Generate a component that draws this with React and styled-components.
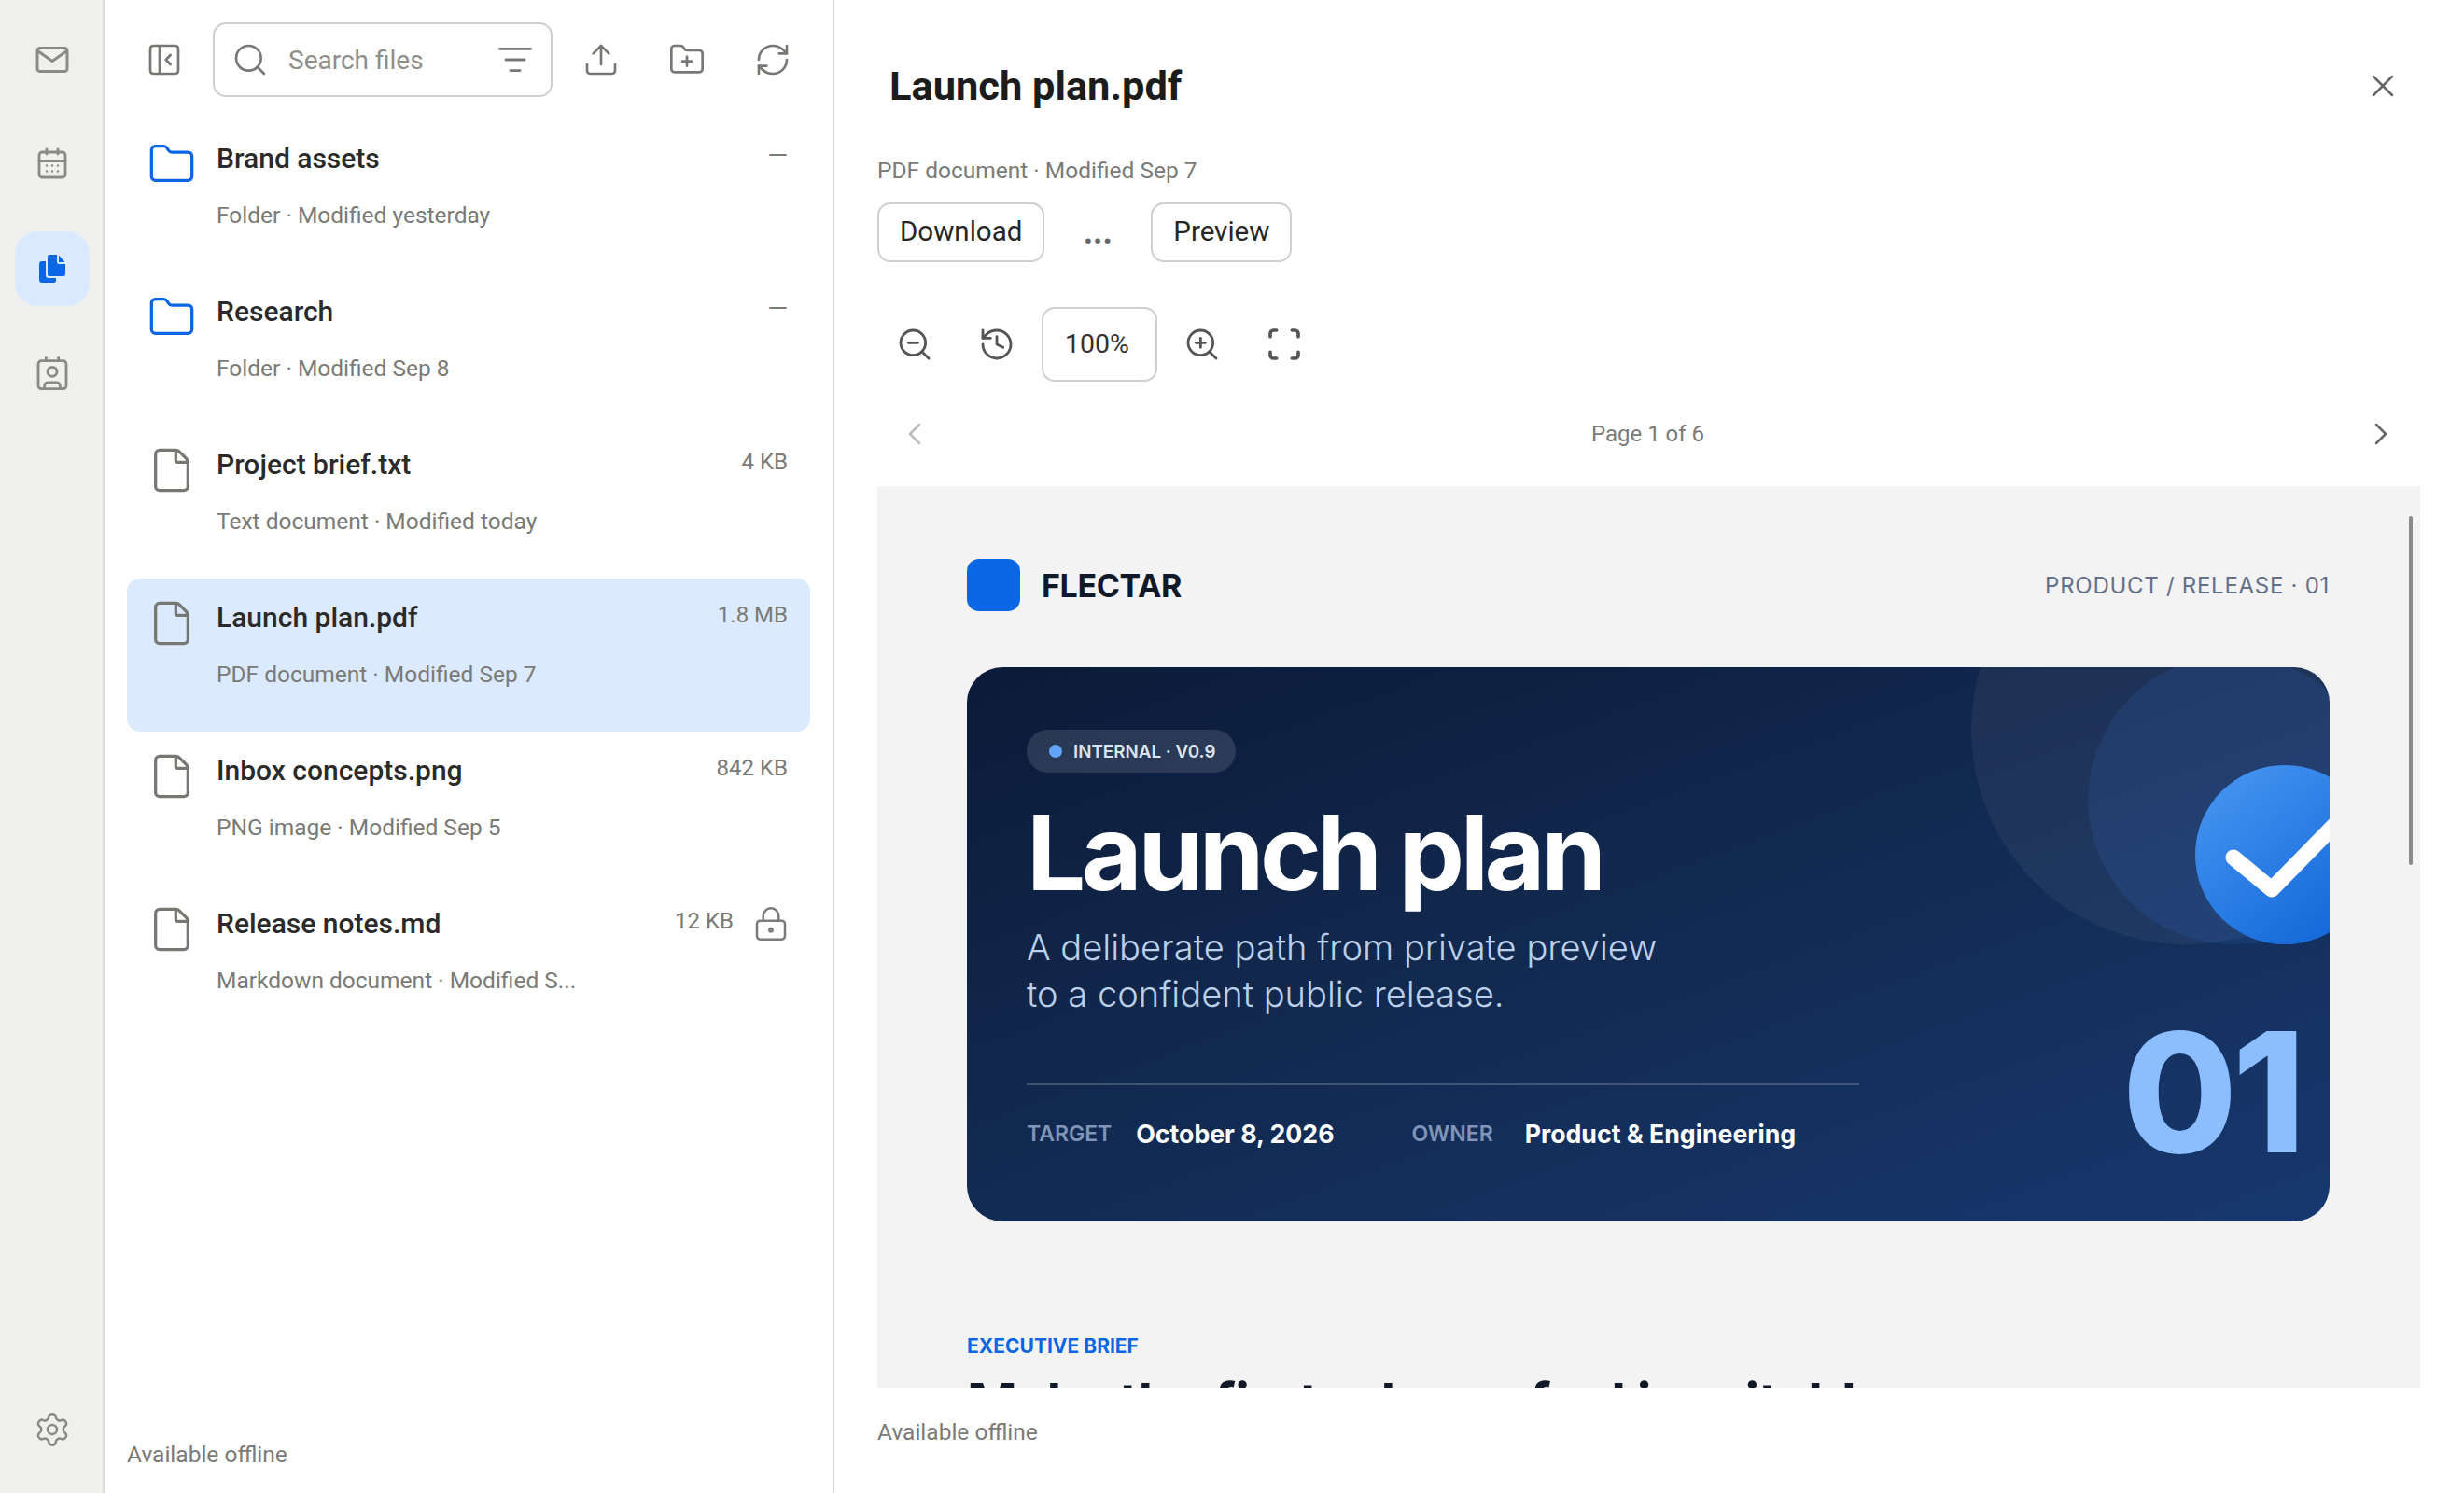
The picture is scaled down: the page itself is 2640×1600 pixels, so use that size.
import React from "react";
import styled, { createGlobalStyle } from "styled-components";
import {
  Contact,
  Settings,
  PanelLeftClose,
  Search,
  ListFilter,
  Upload,
  FolderPlus,
  RefreshCw,
  Folder,
  File,
  LockKeyhole,
  X,
  ZoomOut,
  ZoomIn,
  History,
  Scan,
  ChevronLeft,
  ChevronRight,
} from "lucide-react";

const GlobalStyle = createGlobalStyle`
  html, body { margin: 0; padding: 0; background: #fff; }
  body { font-family: "Roboto", "Liberation Sans", sans-serif; }
`;

const Shell = styled.div`
  display: grid;
  grid-template-columns: 112px 782px 1fr;
  grid-template-rows: minmax(0, 1fr);
  width: 2640px;
  height: 1600px;
  overflow: hidden;
  color: #222;
`;

const Rail = styled.nav`
  display: flex;
  flex-direction: column;
  align-items: center;
  gap: 32px;
  padding: 24px 0 28px 2px;
  box-sizing: border-box;
  background: #f0f0ef;
  border-right: 2px solid #dcdcda;
`;

const RailItem = styled.div`
  display: flex;
  align-items: center;
  justify-content: center;
  width: 80px;
  height: 80px;
  flex: none;
  border-radius: 24px;
  color: #8a8a87;
  background: ${(p) => (p.$active ? "#dbeafe" : "transparent")};
  margin-top: ${(p) => (p.$bottom ? "auto" : "0")};
`;

const ListPanel = styled.section`
  display: flex;
  flex-direction: column;
  padding: 24px 24px 24px;
  box-sizing: border-box;
  border-right: 2px solid #dcdcda;
`;

const ListHeader = styled.div`
  display: flex;
  gap: 12px;
  margin-bottom: 24px;
`;

const IconButton = styled.div`
  display: flex;
  align-items: center;
  justify-content: center;
  width: 80px;
  height: 80px;
  flex: none;
  color: ${(p) => p.$color || "#777773"};
`;

const SearchBox = styled.div`
  display: flex;
  align-items: center;
  flex: 1;
  height: 80px;
  box-sizing: border-box;
  padding: 0 18px;
  gap: 21px;
  border: 2px solid #cfcfcd;
  border-radius: 14px;
  color: #777773;
`;

const SearchText = styled.span`
  flex: 1;
  font-size: 28px;
  color: #8e8e8b;
`;

const FileList = styled.div`
  display: flex;
  flex-direction: column;
  flex: 1;
`;

const Row = styled.div`
  display: grid;
  grid-template-columns: 52px 1fr auto;
  column-gap: 22px;
  height: 164px;
  box-sizing: border-box;
  padding: 22px 24px 0 22px;
  border-radius: 14px;
  background: ${(p) => (p.$selected ? "#dbeafe" : "transparent")};
`;

const RowIcon = styled.div`
  color: ${(p) => (p.$folder ? "#0b66e4" : "#777773")};
  height: 52px;
`;

const RowText = styled.div`
  display: flex;
  flex-direction: column;
  min-width: 0;
`;

const RowTitle = styled.div`
  font-size: 30px;
  line-height: 40px;
  font-weight: 500;
  color: #2a2a2a;
`;

const RowSub = styled.div`
  margin-top: 21px;
  font-size: 24.5px;
  line-height: 40px;
  color: #7a7a77;
  white-space: nowrap;
`;

const RowMeta = styled.div`
  display: flex;
  align-items: flex-start;
  gap: 20px;
  font-size: ${(p) => (p.$dash ? "28px" : "24px")};
  line-height: 34px;
  color: #7a7a77;
`;

const LockSlot = styled.span`
  margin-right: -2px;
`;

const Offline = styled.div`
  font-size: 24.5px;
  line-height: 34px;
  color: #7a7a77;
`;

const Preview = styled.main`
  display: flex;
  flex-direction: column;
  min-width: 0;
  min-height: 0;
  padding: 0 47px 0 46px;
`;

const TitleRow = styled.div`
  display: flex;
  align-items: center;
  justify-content: space-between;
  height: 104px;
  margin-top: 40px;
`;

const Title = styled.h1`
  margin: 0 0 0 13px;
  font-size: 43.4px;
  font-weight: 700;
  color: #1c1c1c;
`;

const Meta = styled.div`
  margin-top: 22px;
  font-size: 24.5px;
  line-height: 34px;
  color: #7a7a77;
`;

const Actions = styled.div`
  display: flex;
  gap: 12px;
  margin-top: 17px;
`;

const ActionButton = styled.div`
  display: flex;
  align-items: center;
  height: 64px;
  box-sizing: border-box;
  padding: 0 22px 2px;
  border: 2px solid #cfcfcd;
  border-radius: 14px;
  font-size: 29.5px;
  color: #262626;
`;

const More = styled.div`
  width: 90px;
  text-align: center;
  font-size: 36px;
  font-weight: 700;
  line-height: 64px;
  color: #666;
`;

const ZoomRow = styled.div`
  display: flex;
  gap: 8px;
  margin-top: 48px;
`;

const ZoomValue = styled.div`
  display: flex;
  align-items: center;
  justify-content: center;
  width: 124px;
  height: 80px;
  box-sizing: border-box;
  padding: 0 5px 2px 0;
  border: 2px solid #cfcfcd;
  border-radius: 14px;
  font-size: 28.5px;
  color: #333;
`;

const Pager = styled.div`
  display: flex;
  align-items: center;
  justify-content: space-between;
  height: 112px;
  padding: 0 22px 0 20px;
  font-size: 24px;
  color: #7a7a77;
`;

const Frame = styled.div`
  position: relative;
  flex: 1;
  min-height: 0;
  overflow: hidden;
  background: #f3f3f3;
`;

const Scrollbar = styled.div`
  position: absolute;
  top: 32px;
  right: 8px;
  width: 4px;
  height: 374px;
  border-radius: 2px;
  background: #8a8a8a;
`;

const Doc = styled.div`
  padding: 78px 97px 0 96px;
  font-family: "Inter", "Liberation Sans", sans-serif;
`;

const DocHeader = styled.div`
  display: flex;
  align-items: center;
  gap: 23px;
  height: 56px;
`;

const LogoMark = styled.div`
  width: 57px;
  height: 56px;
  border-radius: 13px;
  background: #0b66e4;
`;

const Brand = styled.div`
  flex: 1;
  font-size: 34px;
  font-weight: 700;
  letter-spacing: -0.01em;
  color: #111827;
`;

const Crumb = styled.div`
  font-size: 24px;
  letter-spacing: 0.03em;
  color: #64708a;
`;

const Hero = styled.div`
  position: relative;
  height: 594px;
  margin-top: 60px;
  box-sizing: border-box;
  padding: 67px 64px 0;
  overflow: hidden;
  border-radius: 38px;
  background: linear-gradient(160deg, #0b1a38 0%, #12294f 45%, #17386f 100%);
`;

const HeroArt = styled.svg`
  position: absolute;
  top: 0;
  left: 0;
`;

const HeroBody = styled.div`
  position: relative;
`;

const Chip = styled.div`
  display: inline-flex;
  align-items: center;
  gap: 12px;
  height: 46px;
  padding: 0 22px 0 24px;
  box-sizing: border-box;
  border-radius: 23px;
  background: rgba(255, 255, 255, 0.12);
  font-size: 18.8px;
  font-weight: 600;
  color: #dbe4f0;
`;

const ChipDot = styled.span`
  width: 14px;
  height: 14px;
  border-radius: 50%;
  background: #60a5fa;
`;

const HeroTitle = styled.div`
  margin-top: 23px;
  font-size: 112px;
  line-height: 124px;
  font-weight: 700;
  letter-spacing: -0.04em;
  color: #fff;
`;

const HeroSub = styled.div`
  margin-top: 15px;
  font-size: 38.1px;
  line-height: 50px;
  font-weight: 300;
  color: #bcd0ea;
`;

const Divider = styled.div`
  width: 892px;
  height: 2px;
  margin-top: 71px;
  background: rgba(255, 255, 255, 0.2);
`;

const HeroMeta = styled.div`
  display: flex;
  align-items: center;
  height: 40px;
  margin-top: 32px;
`;

const MetaLabel = styled.span`
  font-size: 23px;
  font-weight: 600;
  color: #8095b8;
  margin-right: ${(p) => p.$gap}px;
`;

const MetaValue = styled.span`
  font-size: 26.7px;
  font-weight: 700;
  color: #fff;
  margin-right: ${(p) => p.$gap || 0}px;
`;

const BigNumber = styled.div`
  position: absolute;
  right: 31px;
  bottom: 63px;
  font-size: 178px;
  line-height: 150px;
  font-weight: 800;
  letter-spacing: -0.03em;
  color: #8cbdff;
`;

const Eyebrow = styled.div`
  margin-top: 118px;
  font-size: 21px;
  line-height: 32px;
  font-weight: 700;
  color: #0b66e4;
`;

const Heading = styled.div`
  margin-top: 8px;
  font-size: 58px;
  line-height: 72px;
  font-weight: 700;
  letter-spacing: -0.018em;
  color: #111827;
  white-space: nowrap;
`;

const PreviewFoot = styled.div`
  height: 112px;
  flex: none;
  box-sizing: border-box;
  padding-top: 30px;
  font-size: 24.5px;
  line-height: 34px;
  color: #7a7a77;
`;

const MailIcon = () => (
  <svg width="40" height="40" viewBox="0 0 40 40" fill="none" stroke="currentColor" strokeWidth="3" strokeLinecap="round" strokeLinejoin="round">
    <rect x="4" y="7.5" width="32" height="25" rx="3" />
    <path d="M5 11l15 10.500L35 11" />
  </svg>
);

const CalendarIcon = () => (
  <svg width="40" height="40" viewBox="0 0 40 40" fill="none" stroke="currentColor" strokeWidth="2.800" strokeLinecap="round" strokeLinejoin="round">
    <path d="M14 4v5M26 4v5" />
    <rect x="6" y="7" width="28" height="27" rx="3" />
    <path d="M6 16.500h28" />
    <path d="M14 21.500h.01M20 21.500h.01M26 21.500h.01M14 27.500h.01M20 27.500h.01M26 27.500h.01" strokeWidth="2.400" />
  </svg>
);

const FilesIcon = () => (
  <svg width="40" height="40" viewBox="0 0 40 40" fill="#0b66e4">
    <path d="M17 5h8v8a2 2 0 0 0 2 2h7v11a2 2 0 0 1-2 2H17a2 2 0 0 1-2-2V7a2 2 0 0 1 2-2Z" />
    <path d="M27 5.500L33.500 13H27Z" />
    <path d="M13 12v15a3 3 0 0 0 3 3h8v2.500a2.500 2.500 0 0 1-2.500 2.500H9a3 3 0 0 1-3-3V15a3 3 0 0 1 3-3Z" />
  </svg>
);

const HeroDecor = () => (
  <HeroArt width="1460" height="594" viewBox="0 0 1460 594">
    <defs>
      <linearGradient id="badge" x1="0.1" y1="0" x2="0.9" y2="1">
        <stop offset="0" stopColor="#4696f2" />
        <stop offset="1" stopColor="#0f64d6" />
      </linearGradient>
    </defs>
    <circle cx="1306" cy="67" r="230" fill="#fff" fillOpacity="0.05" />
    <circle cx="1356" cy="142" r="155" fill="#3b82f6" fillOpacity="0.12" />
    <circle cx="1412" cy="201" r="96" fill="url(#badge)" />
    <path d="M1357 204l41 34 90-92" fill="none" stroke="#fff" strokeWidth="17" strokeLinecap="round" strokeLinejoin="round" />
  </HeroArt>
);

const files = [
  { name: "Brand assets", sub: "Folder · Modified yesterday", folder: true, meta: "—" },
  { name: "Research", sub: "Folder · Modified Sep 8", folder: true, meta: "—" },
  { name: "Project brief.txt", sub: "Text document · Modified today", meta: "4 KB" },
  { name: "Launch plan.pdf", sub: "PDF document · Modified Sep 7", meta: "1.8 MB", selected: true },
  { name: "Inbox concepts.png", sub: "PNG image · Modified Sep 5", meta: "842 KB" },
  { name: "Release notes.md", sub: "Markdown document · Modified S...", meta: "12 KB", locked: true },
];

export default function App() {
  return (
    <>
      <GlobalStyle />
      <Shell>
        <Rail>
          <RailItem><MailIcon /></RailItem>
          <RailItem><CalendarIcon /></RailItem>
          <RailItem $active><FilesIcon /></RailItem>
          <RailItem><Contact size={40} strokeWidth={1.7} /></RailItem>
          <RailItem $bottom><Settings size={40} strokeWidth={1.5} /></RailItem>
        </Rail>

        <ListPanel>
          <ListHeader>
            <IconButton><PanelLeftClose size={40} strokeWidth={1.6} /></IconButton>
            <SearchBox>
              <Search size={40} strokeWidth={1.6} />
              <SearchText>Search files</SearchText>
              <ListFilter size={40} strokeWidth={1.7} />
            </SearchBox>
            <IconButton><Upload size={40} strokeWidth={1.6} /></IconButton>
            <IconButton><FolderPlus size={40} strokeWidth={1.6} /></IconButton>
            <IconButton><RefreshCw size={40} strokeWidth={1.6} /></IconButton>
          </ListHeader>
          <FileList>
            {files.map((f) => (
              <Row key={f.name} $selected={f.selected}>
                <RowIcon $folder={f.folder}>
                  {f.folder ? <Folder size={52} strokeWidth={1.5} /> : <File size={52} strokeWidth={1.5} />}
                </RowIcon>
                <RowText>
                  <RowTitle>{f.name}</RowTitle>
                  <RowSub>{f.sub}</RowSub>
                </RowText>
                <RowMeta $dash={f.folder}>
                  {f.meta}
                  {f.locked && <LockSlot><LockKeyhole size={40} strokeWidth={1.5} /></LockSlot>}
                </RowMeta>
              </Row>
            ))}
          </FileList>
          <Offline>Available offline</Offline>
        </ListPanel>

        <Preview>
          <TitleRow>
            <Title>Launch plan.pdf</Title>
            <IconButton $color="#666"><X size={40} strokeWidth={1.5} /></IconButton>
          </TitleRow>
          <Meta>PDF document · Modified Sep 7</Meta>
          <Actions>
            <ActionButton>Download</ActionButton>
            <More>...</More>
            <ActionButton>Preview</ActionButton>
          </Actions>
          <ZoomRow>
            <IconButton $color="#555"><ZoomOut size={40} strokeWidth={1.7} /></IconButton>
            <IconButton $color="#555"><History size={40} strokeWidth={1.7} /></IconButton>
            <ZoomValue>100%</ZoomValue>
            <IconButton $color="#555"><ZoomIn size={40} strokeWidth={1.7} /></IconButton>
            <IconButton $color="#555"><Scan size={40} strokeWidth={2.2} /></IconButton>
          </ZoomRow>
          <Pager>
            <ChevronLeft size={40} color="#bbb" strokeWidth={1.5} />
            <span>Page 1 of 6</span>
            <ChevronRight size={40} color="#666" strokeWidth={1.5} />
          </Pager>
          <Frame>
            <Doc>
              <DocHeader>
                <LogoMark />
                <Brand>FLECTAR</Brand>
                <Crumb>PRODUCT / RELEASE · 01</Crumb>
              </DocHeader>
              <Hero>
                <HeroDecor />
                <HeroBody>
                  <Chip><ChipDot />INTERNAL · V0.9</Chip>
                  <HeroTitle>Launch plan</HeroTitle>
                  <HeroSub>A deliberate path from private preview<br />to a confident public release.</HeroSub>
                  <Divider />
                  <HeroMeta>
                    <MetaLabel $gap={26}>TARGET</MetaLabel>
                    <MetaValue $gap={83}>October 8, 2026</MetaValue>
                    <MetaLabel $gap={34}>OWNER</MetaLabel>
                    <MetaValue>Product &amp; Engineering</MetaValue>
                  </HeroMeta>
                </HeroBody>
                <BigNumber>01</BigNumber>
              </Hero>
              <Eyebrow>EXECUTIVE BRIEF</Eyebrow>
              <Heading>Make the first release feel inevitable</Heading>
            </Doc>
            <Scrollbar />
          </Frame>
          <PreviewFoot>Available offline</PreviewFoot>
        </Preview>
      </Shell>
    </>
  );
}
